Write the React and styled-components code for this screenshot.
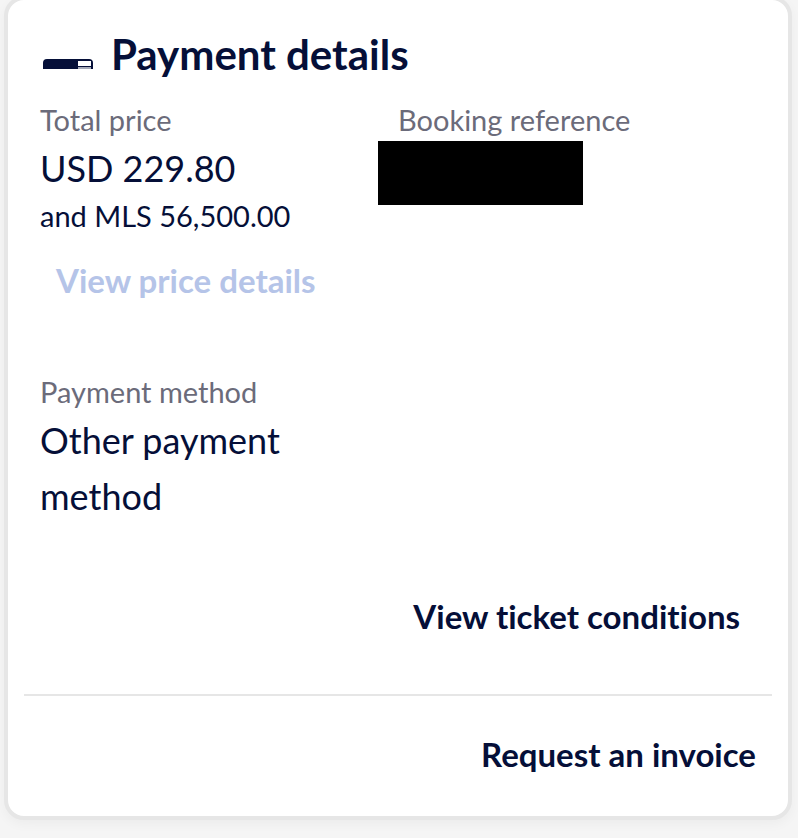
import React from "react";
import styled, { createGlobalStyle } from "styled-components";

const PaymentDetails = () => {
    return (
        <>
            <GlobalStyle />
            <Page>
                <Card>
                    <Header>
                        <CardIcon viewBox="0 0 52 12" aria-hidden="true">
                            <path d="M2 11V5Q2 1 6 1H48Q52 1 52 5V11H50V10H37V11Z" fill="#050f38" />
                            <path d="M37 3H50V8H37Z" fill="#fff" />
                            <path d="M37 9H50V11H37Z" fill="#a5a9b8" />
                        </CardIcon>
                        <Title>Payment details</Title>
                    </Header>

                    <Columns>
                        <div>
                            <Label>Total price</Label>
                            <Value>USD 229.80</Value>
                            <Miles>and MLS 56,500.00</Miles>
                        </div>
                        <div>
                            <Label>Booking reference</Label>
                            <Redacted />
                        </div>
                    </Columns>
                    <PriceButton type="button" disabled>View price details</PriceButton>

                    <Method>
                        <Label>Payment method</Label>
                        <Value>Other payment method</Value>
                    </Method>

                    <Conditions>
                        <ActionButton type="button">View ticket conditions</ActionButton>
                    </Conditions>
                    <Invoice>
                        <ActionButton type="button">Request an invoice</ActionButton>
                    </Invoice>
                </Card>
            </Page>
        </>
    );
};

export default PaymentDetails;

const GlobalStyle = createGlobalStyle`
    * {
        box-sizing: border-box;
    }

    body {
        margin: 0;
        background: #f5f5f5;
        color: #050f38;
        font-family: Lato, "Open Sans", sans-serif;
        font-variant-ligatures: none;
    }
`;

const Page = styled.main`
    margin-top: -4px;
    padding: 0 6px 18px 4px;
`;

const Card = styled.section`
    padding: 30px 16px 42px;
    background: #fff;
    border: 4px solid #e6e6e6;
    border-radius: 20px;
    box-shadow: 0 4px 12px rgba(0, 0, 0, 0.04);
`;

const Header = styled.header`
    display: flex;
    align-items: center;
    gap: 18px;
    padding-left: 17px;
`;

const CardIcon = styled.svg`
    width: 52px;
    height: 12px;
    margin-top: 20px;
`;

const Title = styled.h2`
    margin: 0;
    font-size: 42px;
    line-height: 48px;
    font-weight: 700;
`;

const Columns = styled.div`
    display: grid;
    grid-template-columns: 1fr 1fr;
    padding: 22px 16px 0;
`;

const Label = styled.p`
    margin: 0;
    color: #6b6b7a;
    font-size: 29px;
    line-height: 40px;
`;

const Value = styled.p`
    margin: 0;
    font-size: 36px;
    line-height: 56px;
`;

const Miles = styled.p`
    margin: 0;
    font-size: 29px;
    line-height: 40px;
`;

// hides the booking code
const Redacted = styled.div`
    width: 205px;
    height: 64px;
    margin: 1px 0 0 -20px;
    background: #000;
`;

const ActionButton = styled.button`
    padding: 0;
    border: 0;
    background: none;
    color: #050f38;
    font: inherit;
    font-size: 33px;
    line-height: 40px;
    font-weight: 700;
    font-variant-ligatures: none;
    cursor: pointer;
`;

const PriceButton = styled(ActionButton)`
    margin: 24px 32px 0;
    color: #b5c4e8;
    cursor: default;
`;

const Method = styled.div`
    width: 50%;
    padding: 72px 60px 0 16px;
`;

const Conditions = styled.div`
    padding: 72px 32px 58px 0;
    border-bottom: 2px solid #e6e6e6;
    text-align: right;
`;

const Invoice = styled.div`
    padding: 38px 16px 0 0;
    text-align: right;
`;
